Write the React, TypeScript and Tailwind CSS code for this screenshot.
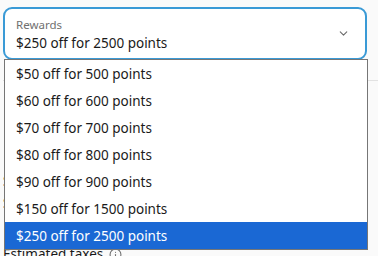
import { ChevronDown, Info } from "lucide-react";

const OPTIONS = [
  "$50 off for 500 points",
  "$60 off for 600 points",
  "$70 off for 700 points",
  "$80 off for 800 points",
  "$90 off for 900 points",
  "$150 off for 1500 points",
  "$250 off for 2500 points",
];

const SELECTED = 6;

export default function App() {
  return (
    <div
      className="relative w-[378px] h-[256px] overflow-hidden bg-[#fafafa] text-[#1a1a1a]"
      style={{ fontFamily: '"Noto Sans", "Open Sans", sans-serif' }}
    >
      {/* page behind the open list */}
      <div className="flex flex-col pt-[7px] pl-[3px] pr-[11px]">
        <div className="flex items-start h-[53px] rounded-[9px] border-2 border-[#3a9ad6] bg-white pl-[11px] pr-[15px] pt-[10px]">
          <div className="flex flex-col flex-1 leading-none">
            <span className="text-[11.5px] text-[#707070]">Rewards</span>
            <span className="mt-[6px] text-[13.5px] text-[#1a1a1a]">$250 off for 2500 points</span>
          </div>
          <ChevronDown size={13} strokeWidth={2} className="mt-[8px] text-[#6b6b6b]" />
        </div>
        <div className="mt-[20px] -mr-[11px] h-px bg-[#e2e2e2]" />
        <div className="mt-[90px] flex flex-col gap-[2px] text-[13.5px] leading-[20px]">
          <span>Subtotal</span>
          <span>Shipping</span>
        </div>
        <div className="mt-[31px] flex items-center gap-[6px] text-[13.5px] leading-[20px]">
          <span>Estimated taxes</span>
          <Info size={13} className="text-[#707070]" />
        </div>
      </div>

      {/* native dropdown list */}
      <div className="absolute left-[4px] top-[59px] w-[364px] border border-[#767676] bg-white">
        {OPTIONS.map((o, i) => (
          <div
            key={o}
            className={
              i === SELECTED
                ? "flex items-center h-[27px] pl-[11px] pt-[2px] text-[13.5px] bg-[#1a68d4] text-white"
                : "flex items-center h-[27px] pl-[11px] pt-[2px] text-[13.5px] text-[#1a1a1a]"
            }
          >
            {o}
          </div>
        ))}
      </div>
    </div>
  );
}
